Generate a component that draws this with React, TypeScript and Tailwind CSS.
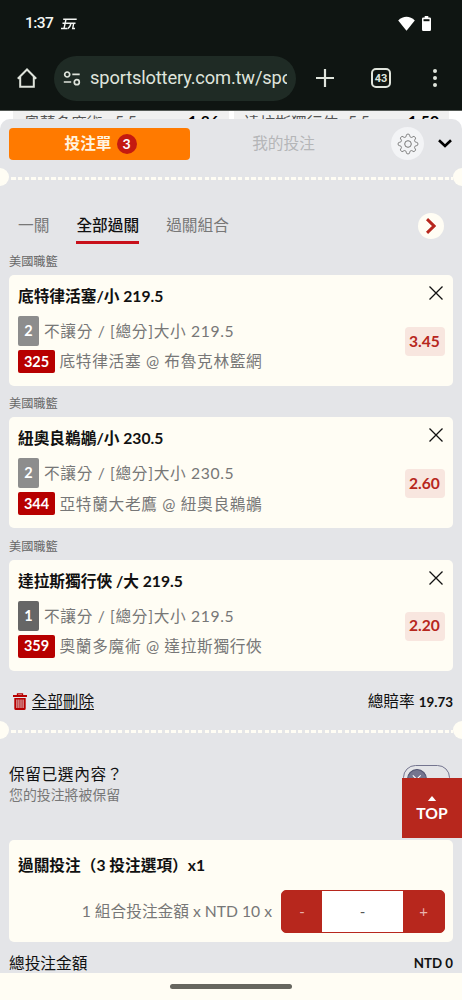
import React from 'react';

type Pick = {
  title: string;
  kind: string;
  kindClass: string;
  market: string;
  code: string;
  match: string;
  odds: string;
};

const picks: Pick[] = [
  { title: '底特律活塞/小 219.5', kind: '2', kindClass: 'bg-[#8d8d8d]', market: '不讓分 / [總分]大小 219.5', code: '325', match: '底特律活塞 @ 布魯克林籃網', odds: '3.45' },
  { title: '紐奧良鵜鶘/小 230.5', kind: '2', kindClass: 'bg-[#8d8d8d]', market: '不讓分 / [總分]大小 230.5', code: '344', match: '亞特蘭大老鷹 @ 紐奧良鵜鶘', odds: '2.60' },
  { title: '達拉斯獨行俠 /大 219.5', kind: '1', kindClass: 'bg-[#666666]', market: '不讓分 / [總分]大小 219.5', code: '359', match: '奧蘭多魔術 @ 達拉斯獨行俠', odds: '2.20' },
];

function StatusBar() {
  return (
    <div className="flex h-[46px] items-center pl-[25px] pr-[31px] font-['Roboto','Noto_Sans_CJK_TC',sans-serif] text-[15.5px] leading-[20px] text-[#f4f6f3]">
      <span className="w-[36px] font-medium tracking-[-0.6px]">1:37</span>
      <svg className="mt-[1px] h-[12px] w-[16px]" viewBox="0 0 16 12" fill="none" stroke="#f4f6f3" strokeWidth="1.4">
        <path d="M2.200 1.200h13.500M1.500 5.200h13M5 1.200 3 10.500M0 10.500h6M10 5.200C9.500 8 8 10 6.500 10.800M12.700 5.200l-1 5.300h2.300" />
      </svg>
      <svg className="ml-auto h-[15px] w-[17px]" viewBox="0 0 17 15" fill="#fff">
        <path d="M8.500 14.800 0.200 4.600C5 -0.400 12 -0.400 16.800 4.600Z" />
      </svg>
      <svg className="ml-[7px] h-[15px] w-[9px]" viewBox="0 0 9 15">
        <path fill="#fff" d="M2.700 0h3.600v1.500h1.400Q9 1.500 9 2.800v10.700Q9 15 7.700 15H1.300Q0 15 0 13.500V2.800Q0 1.500 1.300 1.500h1.400Z" />
        <path fill="#0f1512" d="M1.500 3.200h6v2h-6z" />
      </svg>
    </div>
  );
}

function BrowserBar() {
  return (
    <div className="flex h-[65px] items-center border-b border-[#555a56] pr-[25px] pl-[17px]">
      <svg className="h-[20px] w-[20px] shrink-0" viewBox="0 0 20 20" fill="none" stroke="#dfe4dc" strokeWidth="2">
        <path d="M0.800 10.800 10 1.500l9.200 9.300M3.200 9V18.800H16.800V9" />
      </svg>
      <div className="ml-[17px] flex h-[45px] w-[242px] shrink-0 items-center rounded-full bg-[#1f2b25] pl-[9px]">
        <svg className="h-[15px] w-[18px] shrink-0" viewBox="0 0 18 15" fill="none" stroke="#dfe4dc" strokeWidth="1.7">
          <circle cx="4.200" cy="3.500" r="2.500" />
          <path d="M9.300 3.300h7.400M0.800 11h7.400" />
          <circle cx="13.800" cy="11.200" r="2.500" />
        </svg>
        <div className="ml-[9px] w-[197px] overflow-hidden whitespace-nowrap font-['Roboto',sans-serif] text-[18.300px] leading-[28px] tracking-[-0.160px] text-[#dfe4dc]">
          sportslottery.com.tw/spo
        </div>
      </div>
      <svg className="ml-[20px] h-[18px] w-[18px] shrink-0" viewBox="0 0 18 18" stroke="#dfe4dc" strokeWidth="2.200">
        <path d="M9 0v18M0 9h18" />
      </svg>
      <div className="ml-[37px] flex h-[20px] w-[20px] shrink-0 items-center justify-center rounded-[5px] border-2 border-[#dfe4dc] font-['Roboto',sans-serif] text-[11px] font-bold leading-none text-[#dfe4dc]">
        43
      </div>
      <div className="ml-auto flex flex-col gap-[2.500px]">
        <i className="h-[4.500px] w-[4.500px] rounded-full bg-[#dfe4dc]" />
        <i className="h-[4.500px] w-[4.500px] rounded-full bg-[#dfe4dc]" />
        <i className="h-[4.500px] w-[4.500px] rounded-full bg-[#dfe4dc]" />
      </div>
    </div>
  );
}

function OddsBehind() {
  return (
    <div className="flex h-[20px] gap-[5px] overflow-hidden bg-white pl-[13px] pr-[13px] text-[15.700px] leading-[20px] text-[#555]">
      <div className="flex h-[20px] w-[216px] bg-[#f0f0f0] pr-[10px] pl-[11px]">
        <span className="w-[91px] pt-[2px]">奧蘭多魔術</span>
        <span>5.5</span>
        <b className="ml-auto text-black">1.86</b>
      </div>
      <div className="flex h-[20px] flex-1 bg-[#f0f0f0] pr-[10px] pl-[10px]">
        <span className="w-[104px] pt-[2px]">達拉斯獨行俠</span>
        <span>5.5</span>
        <b className="ml-auto text-black">1.50</b>
      </div>
    </div>
  );
}

function Perforation() {
  return (
    <div className="flex h-[18px] items-center">
      <div className="h-[18px] w-[9px] shrink-0 rounded-r-full bg-[#fffdf4]" />
      <div className="mt-[2px] h-[3px] flex-1 bg-[repeating-linear-gradient(90deg,transparent_0_2.200px,#fffdf4_2.200px_6.670px)]" />
      <div className="h-[18px] w-[9px] shrink-0 rounded-l-full bg-[#fffdf4]" />
    </div>
  );
}

function PickCard({ pick }: { pick: Pick }) {
  return (
    <div className="h-[142.400px] px-[9px]">
      <div className="h-[24px] pt-[2.500px] text-[12.200px] leading-[16px] text-[#666]">美國職籃</div>
      <div className="mt-[-0.600px] flex h-[111px] rounded-[5px] bg-[#fffdf4] pl-[9px] pr-[8.500px]">
        <div className="flex-1 pt-[11px]">
          <div className="h-[20px] whitespace-nowrap text-[15.700px] font-bold leading-[20px] text-[#111]">{pick.title}</div>
          <div className="mt-[10px] flex h-[30px] items-center text-[#777]">
            <span className={'flex h-[30px] w-[21px] items-center justify-center rounded-[2px] text-[14.500px] font-bold text-white ' + pick.kindClass}>{pick.kind}</span>
            <span className="ml-[5px] whitespace-nowrap text-[15.700px] leading-[20px] tracking-[0.650px]">{pick.market}</span>
          </div>
          <div className="mt-[4px] flex h-[23px] items-center text-[#777]">
            <span className="flex h-[23px] w-[37px] items-center justify-center rounded-[2px] bg-[#b70000] text-[14.500px] font-bold text-white">{pick.code}</span>
            <span className="ml-[4.500px] whitespace-nowrap text-[15.700px] leading-[20px] tracking-[0.660px]">{pick.match}</span>
          </div>
        </div>
        <div className="flex w-[40px] flex-col items-end">
          <svg className="mr-[2px] mt-[11px] h-[14px] w-[14px]" viewBox="0 0 14 14" stroke="#111" strokeWidth="1.300">
            <path d="M0.500 0.500l13 13M13.500 0.500l-13 13" />
          </svg>
          <div className="mt-[27px] flex h-[29px] w-[40px] items-center justify-center rounded-[4px] bg-[#f8e6df] text-[15.600px] font-bold text-[#b7271d]">{pick.odds}</div>
        </div>
      </div>
    </div>
  );
}

function Gear() {
  const points: string[] = [];
  for (let i = 0; i <= 96; i++) {
    const a = (i / 96) * Math.PI * 2;
    const wave = Math.max(-1, Math.min(1, 1.700 * Math.cos(8 * a)));
    const r = 8.600 + 1.200 * wave;
    points.push((11 + r * Math.sin(a)).toFixed(2) + ' ' + (11 - r * Math.cos(a)).toFixed(2));
  }
  return (
    <svg className="h-[22px] w-[22px]" viewBox="0 0 22 22" fill="none" stroke="#777" strokeWidth="1">
      <path strokeLinejoin="round" d={'M' + points.join('L') + 'Z'} />
      <circle cx="11" cy="11" r="3.300" />
    </svg>
  );
}

export default function App() {
  return (
    <div className="flex h-[1000px] w-[462px] flex-col overflow-hidden bg-[#0f1512] font-['Lato','Noto_Sans_CJK_TC',sans-serif]" lang="zh-Hant">
      <StatusBar />
      <BrowserBar />
      <OddsBehind />
      <div className="relative mt-[-12px] h-[854px] shrink-0 overflow-hidden rounded-t-[10px] bg-[#e4e5e8]">
        <div className="flex h-[49px] items-center pl-[9px] pr-[9px]">
          <div className="flex h-[32px] w-[181px] items-center justify-center rounded-[4px] bg-[#ff7a00] pl-[2px] text-[15.700px] font-bold text-[#fff3df]">
            投注單
            <span className="ml-[5px] flex h-[20px] w-[20px] items-center justify-center rounded-full bg-[#c41a10] text-[14px] font-bold text-white">3</span>
          </div>
          <div className="w-[187px] pt-[1px] text-center text-[15.700px] text-[#b5b6b8]">我的投注</div>
          <div className="ml-[14px] flex h-[33px] w-[33px] items-center justify-center rounded-full bg-[#f3f4f6]">
            <Gear />
          </div>
          <svg className="ml-auto mr-[1px] h-[9px] w-[14px]" viewBox="0 0 14 9" fill="none" stroke="#000" strokeWidth="2.600">
            <path d="M1 1.200 7 7l6-5.800" />
          </svg>
        </div>
        <Perforation />
        <div className="mt-[20px] flex h-[39px] items-start pl-[18px] pr-[18px] text-[15.700px] leading-[20px] text-[#777]">
          <div className="pt-[9px]">一關</div>
          <div className="ml-[27px] h-[37.500px] border-b-[3px] border-[#c8101a] pt-[9px] font-medium text-[#111]">全部過關</div>
          <div className="ml-[27px] pt-[9px]">過關組合</div>
          <div className="ml-auto mt-[7px] flex h-[26px] w-[26px] items-center justify-center rounded-full bg-[#fffdf4]">
            <svg className="h-[16px] w-[10px]" viewBox="0 0 10 16" fill="none" stroke="#b7271d" strokeWidth="3">
              <path d="M1 1.200 8 8l-7 6.800" />
            </svg>
          </div>
        </div>
        <div className="mt-[6.500px]">
          {picks.map((p) => (
            <PickCard key={p.code} pick={p} />
          ))}
        </div>
        <div className="mt-[12.500px] flex h-[20px] items-center pl-[13px] pr-[9px] text-[15.700px] leading-[20px] text-[#111]">
          <svg className="h-[17px] w-[14px]" viewBox="0 0 14 17">
            <path fill="none" stroke="#b70000" strokeWidth="1.300" d="M4.500 2.500V0.800h5v1.700" />
            <path fill="#b70000" d="M0 2h14v2H0zM1.300 5h11.400v10.500Q12.700 17 11.200 17H2.800Q1.300 17 1.300 15.500Z" />
            <path stroke="#e4e5e8" strokeWidth="0.900" d="M3.900 6.500v8.500M5.900 6.500v8.500M8 6.500v8.500M10.100 6.500v8.500" />
          </svg>
          <span className="ml-[4.500px] border-b border-[#111] leading-[16px]">全部刪除</span>
          <span className="ml-auto">總賠率 <b className="text-[13.400px]">19.73</b></span>
        </div>
        <div className="mt-[10px]"><Perforation /></div>
        <div className="mt-[24.500px] flex h-[42px] items-start justify-between px-[9px]">
          <div>
            <div className="text-[15.700px] leading-[21px] tracking-[0.600px] text-[#111]">保留已選內容？</div>
            <div className="text-[13.900px] leading-[20px] text-[#777]">您的投注將被保留</div>
          </div>
          <div className="mr-[3px] mt-[1px] h-[25px] w-[47px] rounded-full border border-[#74758f] p-[3px]">
            <svg className="h-[20px] w-[20px]" viewBox="0 0 19 19">
              <circle cx="9.500" cy="9.500" r="9" fill="#74758f" stroke="#50526f" />
              <path stroke="#fff" d="M5.500 6 13 13.500M13 6l-7.500 7.500" />
            </svg>
          </div>
        </div>
        <div className="mx-[9px] mt-[34px] h-[102px] rounded-[5px] bg-[#fffdf4] pl-[9px] pr-[8px] pt-[15px]">
          <div className="text-[15.700px] font-bold leading-[20px] text-[#111]">過關投注（3 投注選項）x1</div>
          <div className="mt-[15px] flex h-[43px] items-center justify-end">
            <span className="text-[15.700px] leading-[20px] text-[#777]">1 組合投注金額 x NTD 10 x</span>
            <div className="ml-[9px] flex h-[43px] w-[164px] overflow-hidden rounded-[5px] border border-[#b7271d] bg-[#b7271d] text-[15px] leading-[41px] text-[#e9b4ad]">
              <div className="w-[40px] text-center">-</div>
              <div className="flex-1 bg-white text-center text-[#555]">-</div>
              <div className="w-[41px] text-center">+</div>
            </div>
          </div>
        </div>
        <div className="mt-[11px] flex h-[20px] items-center justify-between px-[9px] text-[15.700px] leading-[20px] text-[#111]">
          <span>總投注金額</span>
          <b className="text-[13.300px]">NTD 0</b>
        </div>
        <div className="absolute right-0 top-[659px] flex h-[60px] w-[60px] flex-col items-center bg-[#b7271d] text-white">
          <svg className="mt-[18px] h-[5px] w-[10px]" viewBox="0 0 10 6" fill="#fff"><path d="M0 6 5 0l5 6Z" /></svg>
          <span className="mt-[2px] text-[15.700px] font-bold leading-[20px]">TOP</span>
        </div>
      </div>
      <div className="flex h-[27px] shrink-0 items-center justify-center bg-[#fffdf4]">
        <div className="h-[5px] w-[122px] rounded-full bg-[#66665f]" />
      </div>
    </div>
  );
}
